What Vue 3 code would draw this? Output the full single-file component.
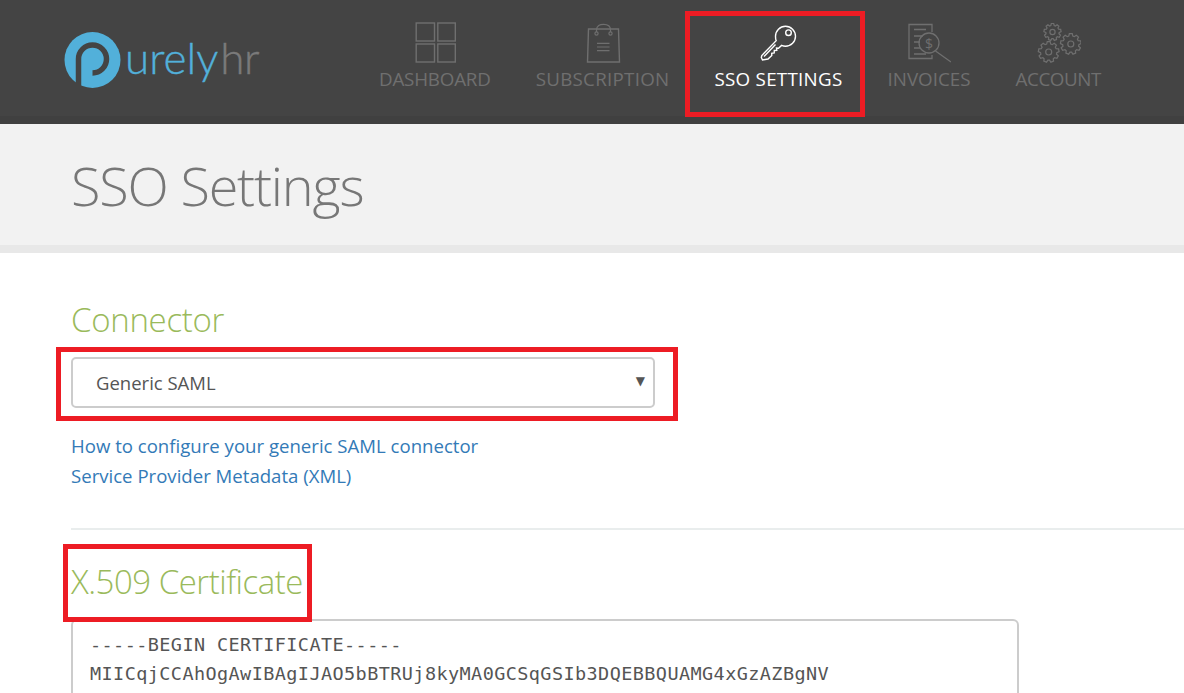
<script setup>
function gear(cx, cy, r, teeth = 9) {
  const pts = [];
  const step = (Math.PI * 2) / teeth;
  const out = r;
  const inn = r * 0.78;
  for (let i = 0; i < teeth; i++) {
    const a = i * step - Math.PI / 2;
    const seq = [
      [inn, a - step * 0.36],
      [out, a - step * 0.2],
      [out, a + step * 0.2],
      [inn, a + step * 0.36],
    ];
    for (const [q, t] of seq) {
      pts.push(`${(cx + q * Math.cos(t)).toFixed(2)} ${(cy + q * Math.sin(t)).toFixed(2)}`);
    }
  }
  return 'M' + pts.join('L') + 'Z';
}
const gears = [
  { x: 17.500, y: 10, r: 8.6, hole: 2.6 },
  { x: 35.800, y: 22, r: 10.4, hole: 3 },
  { x: 13.700, y: 30, r: 10.4, hole: 3 },
].map((g) => ({ ...g, d: gear(g.x, g.y, g.r) }));
</script>

<template>
  <div class="page">
    <header class="topbar">
      <a class="logo">
        <svg class="logo-mark" width="58" height="60" viewBox="0 0 58 60">
          <circle cx="28.5" cy="29" r="28" fill="#52b0da" />
          <path d="M14.500 60V28a14 14 0 1 1 14 14" fill="none" stroke="#444" stroke-width="5.5" />
        </svg>
        <span class="logo-text"><span class="logo-blue">urely</span><span class="logo-grey">hr</span></span>
      </a>
      <nav class="nav">
        <a class="nav-item dash">
          <svg class="icon" width="42" height="42" viewBox="0 0 42 42" fill="none" stroke="currentColor" stroke-width="1.4">
            <rect x="2.200" y="1" width="18.300" height="18" />
            <rect x="23.800" y="1" width="17.500" height="18" />
            <rect x="2.200" y="22" width="18.300" height="18" />
            <rect x="23.800" y="22" width="17.500" height="18" />
          </svg>
          <span>DASHBOARD</span>
        </a>
        <a class="nav-item sub">
          <svg class="icon" width="42" height="42" viewBox="0 0 42 42" fill="none" stroke="currentColor" stroke-width="1.2">
            <path d="M6.500 7H36.500L37.500 40H5.500Z" stroke-width="1.4" />
            <path d="M14.500 10V8C14.500 3.500 18 2.300 21.500 2.300S28.500 3.500 28.500 8V10" />
            <circle cx="14.500" cy="11.500" r="1.600" />
            <circle cx="28.500" cy="11.500" r="1.600" />
            <path d="M15 21.300H27.500M15 25H27.500M15 28.700H27.500" />
          </svg>
          <span>SUBSCRIPTION</span>
        </a>
        <a class="nav-item active">
          <span class="mark-box"></span>
          <svg class="icon" width="42" height="42" viewBox="0 0 42 42" fill="none" stroke="currentColor" stroke-width="1.4">
            <path d="M28.500 4.200C34 4.200 38.500 8.700 38.500 14.200S34 24.200 28.500 24.200C27 24.200 25.800 23.900 24.600 23.400L21.500 26.300L19.500 26L19.800 28.300L17.300 28.500L17.200 31L14.700 31.300L14.800 33.500L11 37L5.500 38L4.300 35.500L4.800 33.500L19.200 18.700C18.700 17.500 18.500 15.700 18.500 14.200C18.500 8.700 23 4.200 28.500 4.200Z" />
            <circle cx="31.500" cy="10.700" r="2.800" />
            <path d="M7 34.500L18.500 22.500" />
          </svg>
          <span>SSO SETTINGS</span>
        </a>
        <a class="nav-item">
          <svg class="icon" width="44" height="42" viewBox="0 0 44 42" fill="none" stroke="currentColor" stroke-width="1.300">
            <path d="M25 10V2.500H2V36.500H25V33" />
            <path d="M7 7.500H19M7 14H16M7 20H13M7 26H13M7 32H19" />
            <circle cx="22" cy="21" r="10" />
            <path d="M28.500 29L44 40" />
            <text class="dollar" x="22" y="26.500" text-anchor="middle">$</text>
          </svg>
          <span>INVOICES</span>
        </a>
        <a class="nav-item acct">
          <svg class="icon" width="46" height="42" viewBox="0 0 46 42" fill="none" stroke="currentColor" stroke-width="1.200">
            <g v-for="g in gears" :key="g.x">
              <path :d="g.d" />
              <circle :cx="g.x" :cy="g.y" :r="g.hole" />
            </g>
          </svg>
          <span>ACCOUNT</span>
        </a>
      </nav>
    </header>

    <section class="title-band">
      <h1>SSO Settings</h1>
    </section>

    <main class="content">
      <h2 class="connector-title">Connector</h2>
      <div class="select-wrap">
        <span class="mark-box"></span>
        <div class="select">
          <span>Generic SAML</span>
          <span class="caret">▼</span>
        </div>
      </div>
      <div class="links">
        <a>How to configure your generic SAML connector</a>
        <a>Service Provider Metadata (XML)</a>
      </div>
      <hr />
      <h2 class="cert-title"><span class="mark-box"></span>X.509 Certificate</h2>
      <div class="cert">
        <div>-----BEGIN CERTIFICATE-----</div>
        <div>MIICqjCCAhOgAwIBAgIJAO5bBTRUj8kyMA0GCSqGSIb3DQEBBQUAMG4xGzAZBgNV</div>
      </div>
    </main>
  </div>
</template>

<style>
html, body { margin: 0; background: #fff; }
</style>

<style scoped>
.page {
  width: 1184px;
  height: 693px;
  overflow: hidden;
  font-family: "Open Sans", "Noto Sans", sans-serif;
  color: #555;
}
.topbar {
  box-sizing: border-box;
  height: 124px;
  display: flex;
  background: #444;
  border-bottom: 8px solid #404040;
}
.logo {
  width: 378px;
  padding: 31px 0 0 64px;
  box-sizing: border-box;
  display: flex;
  align-items: flex-start;
  flex: none;
}
.logo-mark { flex: none; display: block; }
.logo-text {
  font-family: Lato, sans-serif;
  font-weight: 300;
  font-size: 44px;
  line-height: 50px;
  margin: 1px 0 0 3px;
  -webkit-text-stroke: 0.4px currentColor;
}
.logo-blue { color: #52b0da; }
.logo-grey { color: #7a7a7a; margin-left: 2px; letter-spacing: -0.5px; }
.nav {
  display: flex;
  gap: 45px;
  padding-left: 1px;
}
.nav-item {
  position: relative;
  display: flex;
  flex-direction: column;
  align-items: center;
  padding-top: 22px;
  color: #6f6f6f;
  font-size: 18.800px;
  line-height: 24px;
}
.dash { letter-spacing: -0.2px; }
.sub { letter-spacing: 0.25px; }
.acct { letter-spacing: -0.4px; }
.icon { display: block; margin-bottom: 3px; }
.dollar { font-family: "Open Sans", sans-serif; font-size: 14px; fill: currentColor; stroke: none; }
.active { color: #fff; letter-spacing: 0.27px; }
.active .mark-box { top: 11px; left: -29px; right: -22px; bottom: -1px; height: 96px; }
.mark-box {
  position: absolute;
  border: 5px solid #ed1c24;
  pointer-events: none;
}
.title-band {
  box-sizing: border-box;
  height: 129px;
  background: #f2f2f2;
  border-bottom: 8px solid #e8e8e8;
  padding: 23px 0 0 71px;
}
h1 {
  margin: 0;
  font-weight: 300;
  font-size: 54px;
  line-height: 76px;
  color: #777;
  letter-spacing: -1.200px;
}
.content { padding-left: 71px; }
h2 {
  margin: 0;
  font-weight: 300;
  font-size: 33px;
  line-height: 44px;
  color: #9aba5b;
  letter-spacing: -0.5px;
}
.connector-title { padding-top: 45px; letter-spacing: -0.3px; }
.select-wrap { position: relative; width: 584px; margin-top: 15px; }
.select-wrap .mark-box { left: -15px; right: -23px; top: -10px; bottom: -13px; }
.select {
  box-sizing: border-box;
  height: 51px;
  border: 2px solid #ccc;
  border-radius: 5px;
  padding: 0 8px 3px 23px;
  display: flex;
  justify-content: space-between;
  align-items: center;
  font-size: 18.500px;
  color: #555;
}
.select span:first-child { padding-top: 3px; }
.caret { font-size: 12px; font-family: "DejaVu Sans", sans-serif; color: #555; }
.links { margin-top: 23px; display: flex; flex-direction: column; }
.links a {
  color: #337ab7;
  font-size: 18.600px;
  line-height: 30px;
}
hr {
  border: 0;
  border-top: 2px solid #e9eded;
  margin: 37px 0 0;
}
.cert-title {
  position: relative;
  display: inline-block;
  margin-top: 30px;
}
.cert-title .mark-box { left: -8px; right: -9px; top: -16px; bottom: -18px; }
.cert {
  box-sizing: border-box;
  width: 948px;
  height: 300px;
  margin-top: 15px;
  border: 2px solid #ccc;
  border-radius: 6px;
  padding: 9px 17px;
  font-family: "DejaVu Sans Mono", monospace;
  font-size: 18.500px;
  line-height: 29px;
  letter-spacing: 0.410px;
  color: #555;
  white-space: pre;
}
</style>
